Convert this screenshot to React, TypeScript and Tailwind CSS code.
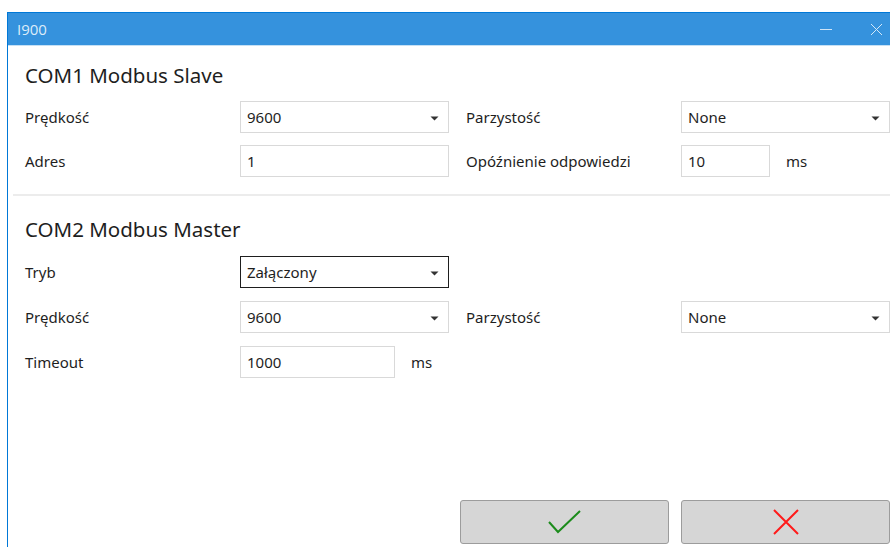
import type { ReactNode } from "react";

const font = { fontFamily: '"Noto Sans", "Open Sans", Arial, sans-serif' };

function Arrow() {
  return (
    <svg width="9" height="5" viewBox="0 0 9 5" className="absolute right-[9px] top-[14px]">
      <path d="M0.5 0.5h8L4.5 4.5z" fill="#333333" />
    </svg>
  );
}

function Combo({ value, focused, w = "w-[209px]" }: { value: string; focused?: boolean; w?: string }) {
  return (
    <div
      className={`relative h-[32px] ${w} flex items-center pl-[6px] text-[15px] text-[#1e1e1e] bg-white border ${
        focused ? "border-[#1e1e1e]" : "border-[#d9d9d9]"
      }`}
    >
      {value}
      <Arrow />
    </div>
  );
}

function Field({ value, w }: { value: string; w: string }) {
  return (
    <div className={`h-[32px] ${w} flex items-center pl-[6px] text-[15px] text-[#1e1e1e] bg-white border border-[#d9d9d9]`}>
      {value}
    </div>
  );
}

function Label({ children }: { children: ReactNode }) {
  return <div className="text-[15px] text-[#1e1e1e] flex items-center h-[32px] whitespace-nowrap">{children}</div>;
}

function Row({ children }: { children: ReactNode }) {
  return <div className="grid grid-cols-[215px_209px_17px_215px_209px] items-center">{children}</div>;
}

export default function App() {
  return (
    <div className="w-[890px] h-[547px] bg-white overflow-hidden pt-[12px] pl-[7px]" style={font}>
      <div className="h-[535px] border-l border-t border-[#0078d7] flex flex-col">
        {/* title bar */}
        <div className="h-[32px] bg-[#3592dd] flex items-center pl-[9px] text-[15px] text-[#dcecf9] shrink-0">
          <span style={{ fontFamily: '"Open Sans", Arial, sans-serif' }}>I900</span>
          <div className="ml-auto flex items-center">
            <div className="w-[12px] h-px bg-[#cfe4f6] mr-[38px]" />
            <svg width="13" height="13" viewBox="0 0 13 13" className="mr-[7px]">
              <path d="M1 1l11 11M12 1L1 12" stroke="#d4e8f8" strokeWidth="1" />
            </svg>
          </div>
        </div>
        <div className="h-px bg-[#c5e0f5] shrink-0" />

        <div className="pl-[17px]">
          <div className="pt-[16px] text-[20.5px] leading-[26px] text-[#1e1e1e]">COM1 Modbus Slave</div>
          <div className="mt-[13px] flex flex-col gap-[12px]">
            <Row>
              <Label>Prędkość</Label>
              <Combo value="9600" />
              <div />
              <Label>Parzystość</Label>
              <Combo value="None" />
            </Row>
            <Row>
              <Label>Adres</Label>
              <Field value="1" w="w-[209px]" />
              <div />
              <Label>Opóźnienie odpowiedzi</Label>
              <div className="flex items-center">
                <Field value="10" w="w-[89px]" />
                <span className="ml-[16px] text-[15px] text-[#1e1e1e]">ms</span>
              </div>
            </Row>
          </div>
        </div>

        <div className="mt-[17px] ml-[5px] h-[2px] bg-[#ececec]" />

        <div className="pl-[17px]">
          <div className="pt-[20px] text-[20.5px] leading-[26px] text-[#1e1e1e]">COM2 Modbus Master</div>
          <div className="mt-[14px] flex flex-col gap-[13px]">
            <Row>
              <Label>Tryb</Label>
              <Combo value="Załączony" focused />
            </Row>
            <Row>
              <Label>Prędkość</Label>
              <Combo value="9600" />
              <div />
              <Label>Parzystość</Label>
              <Combo value="None" />
            </Row>
            <Row>
              <Label>Timeout</Label>
              <div className="flex items-center">
                <Field value="1000" w="w-[155px]" />
                <span className="ml-[16px] text-[15px] text-[#1e1e1e]">ms</span>
              </div>
            </Row>
          </div>
        </div>

        {/* confirm / cancel */}
        <div className="mt-auto mb-[3px] flex justify-end gap-[12px]">
          <button className="w-[209px] h-[44px] bg-[#d6d6d6] border border-[#9c9c9c] rounded-[3px] flex items-center justify-center">
            <svg width="34" height="26" viewBox="0 0 34 26">
              <path d="M1 13l9 10L32 2" fill="none" stroke="#1c8c1c" strokeWidth="2" />
            </svg>
          </button>
          <button className="w-[209px] h-[44px] bg-[#d6d6d6] border border-[#9c9c9c] rounded-[3px] flex items-center justify-center">
            <svg width="26" height="26" viewBox="0 0 26 26">
              <path d="M1 1l24 24M25 1L1 25" fill="none" stroke="#ff1a1a" strokeWidth="2" />
            </svg>
          </button>
        </div>
      </div>
    </div>
  );
}
